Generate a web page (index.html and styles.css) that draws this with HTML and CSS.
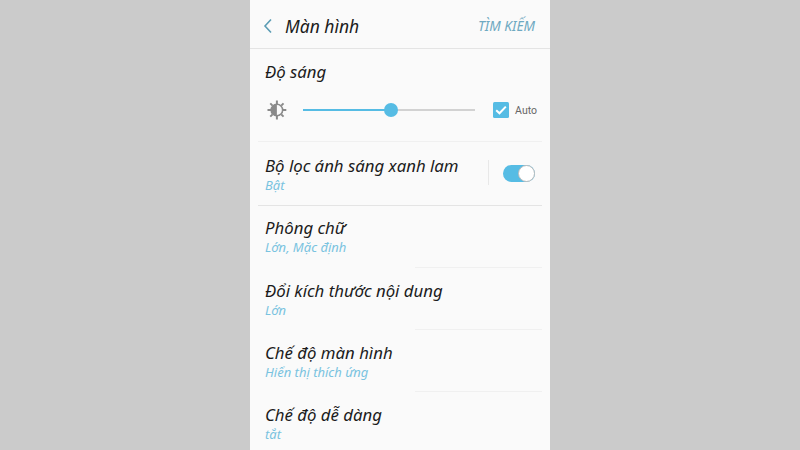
FILE: index.html

```html
<!DOCTYPE html>
<html lang="vi">
<head>
    <meta charset="UTF-8">
    <meta name="viewport" content="width=device-width, initial-scale=1.0">
    <title>Màn hình</title>
    <link rel="stylesheet" href="styles.css">
</head>
<body>
    <div class="phone">
        <header class="topbar">
            <svg class="back" width="10" height="16" viewBox="0 0 10 16"><path d="M8 1.5 L2 8 L8 14.5" fill="none" stroke="#5b9cb4" stroke-width="1.6"/></svg>
            <h1 class="title">Màn hình</h1>
            <span class="search">TÌM KIẾM</span>
        </header>

        <section class="brightness">
            <div class="row-title">Độ sáng</div>
            <div class="slider-row">
                <svg class="sun" width="20" height="20" viewBox="0 0 20 20">
                    <path d="M10 0.5V4M10 16V19.5M0.5 10H4M16 10H19.5M3.3 3.3L5.6 5.6M14.4 14.4L16.7 16.7M3.3 16.7L5.6 14.4M14.4 5.6L16.7 3.3" stroke="#8a8a8a" stroke-width="2"/>
                    <circle cx="10" cy="10" r="5.8" fill="#fafafa" stroke="#8a8a8a" stroke-width="1.6"/>
                    <path d="M10 4.2A5.8 5.8 0 0 0 10 15.8Z" fill="#8a8a8a"/>
                </svg>
                <div class="slider">
                    <div class="slider-fill" style="width: 51%"></div>
                    <div class="slider-knob"></div>
                    <div class="slider-rest"></div>
                </div>
                <div class="auto">
                    <svg width="16" height="16" viewBox="0 0 16 16"><rect width="16" height="16" rx="1.5" fill="#56bce4"/><path d="M3.2 8.2 L6.5 11.3 L12.8 4.6" fill="none" stroke="#fff" stroke-width="2"/></svg>
                    <span class="auto-label">Auto</span>
                </div>
            </div>
        </section>

        <section class="item item-switch">
            <div>
                <div class="row-title">Bộ lọc ánh sáng xanh lam</div>
                <div class="row-sub">Bật</div>
            </div>
            <div class="switch-wrap">
                <div class="switch"><div class="switch-thumb"></div></div>
            </div>
        </section>

        <section class="item item-short item-first">
            <div class="row-title">Phông chữ</div>
            <div class="row-sub">Lớn, Mặc định</div>
        </section>
        <section class="item item-short">
            <div class="row-title">Đổi kích thước nội dung</div>
            <div class="row-sub">Lớn</div>
        </section>
        <section class="item item-short">
            <div class="row-title">Chế độ màn hình</div>
            <div class="row-sub">Hiển thị thích ứng</div>
        </section>
        <section class="item">
            <div class="row-title">Chế độ dễ dàng</div>
            <div class="row-sub">tắt</div>
        </section>
    </div>
</body>
</html>
```

FILE: styles.css

```css
html, body {
    margin: 0;
    height: 450px;
    overflow: hidden;
    background-color: #cbcbcb;
}

body {
    font-family: "Noto Sans", "Open Sans", sans-serif;
    font-style: italic;
    color: #1c1c1c;
}

.phone {
    width: 300px;
    height: 450px;
    margin: 0 auto;
    background-color: #fafafa;
    overflow: hidden;
}

.topbar {
    height: 49px;
    display: flex;
    align-items: center;
    padding: 3px 15px 0 13px;
    box-sizing: border-box;
    border-bottom: 1px solid #e4e4e4;
}

.back {
    margin-right: 12px;
}

.title {
    flex: 1;
    margin: 0;
    font-size: 17.5px;
    font-weight: 400;
    line-height: 24px;
}

.search {
    font-size: 13.7px;
    color: #6ea9c1;
}

.row-title {
    font-size: 16.8px;
    line-height: 22px;
}

.row-sub {
    font-size: 13px;
    line-height: 16px;
    color: #79c3e0;
}

.brightness {
    height: 93px;
    box-sizing: border-box;
    margin: 0 8px;
    padding: 12px 5px 0 7px;
    border-bottom: 1px solid #f0f0f0;
}

.slider-row {
    display: flex;
    align-items: center;
    margin-top: 17px;
}

.sun {
    margin-left: 2px;
}

.slider {
    position: relative;
    display: flex;
    align-items: center;
    width: 174px;
    height: 16px;
    margin-left: 16px;
}

.slider-fill {
    height: 2px;
    background-color: #56bce4;
}

.slider-rest {
    flex: 1;
    height: 2px;
    background-color: #d2d2d2;
}

.slider-knob {
    width: 14px;
    height: 14px;
    margin: 0 -7px;
    position: relative;
    border-radius: 50%;
    background-color: #56bce4;
}

.auto {
    display: flex;
    align-items: center;
    margin-left: 18px;
}

.auto-label {
    margin-left: 6px;
    font-family: "Roboto", sans-serif;
    font-style: normal;
    font-size: 10.5px;
    color: #666;
}

.item {
    margin: 0 8px;
    padding: 12px 7px 0;
    height: 62px;
    box-sizing: border-box;
}

.item-switch {
    display: flex;
    justify-content: space-between;
    height: 64px;
    padding-top: 13px;
    padding-right: 7px;
    border-bottom: 1px solid #e4e4e4;
}

.item-short {
    position: relative;
}

.item-first {
    padding-top: 11px;
}

/* only the right part of the row has a line */
.item-short::after {
    content: "";
    position: absolute;
    right: 0;
    bottom: 0;
    width: 127px;
    height: 1px;
    background-color: #f0f0f0;
}

.switch-wrap {
    display: flex;
    align-items: center;
    height: 25px;
    margin-top: 5px;
    padding-left: 14px;
    border-left: 1px solid #e8e8e8;
}

.switch {
    width: 32px;
    height: 17px;
    margin-top: 1px;
    border-radius: 9px;
    background-color: #56bce4;
    display: flex;
    justify-content: flex-end;
}

.switch-thumb {
    width: 15px;
    height: 15px;
    border: 1px solid #bbb;
    border-radius: 50%;
    background-color: #fff;
}
```
